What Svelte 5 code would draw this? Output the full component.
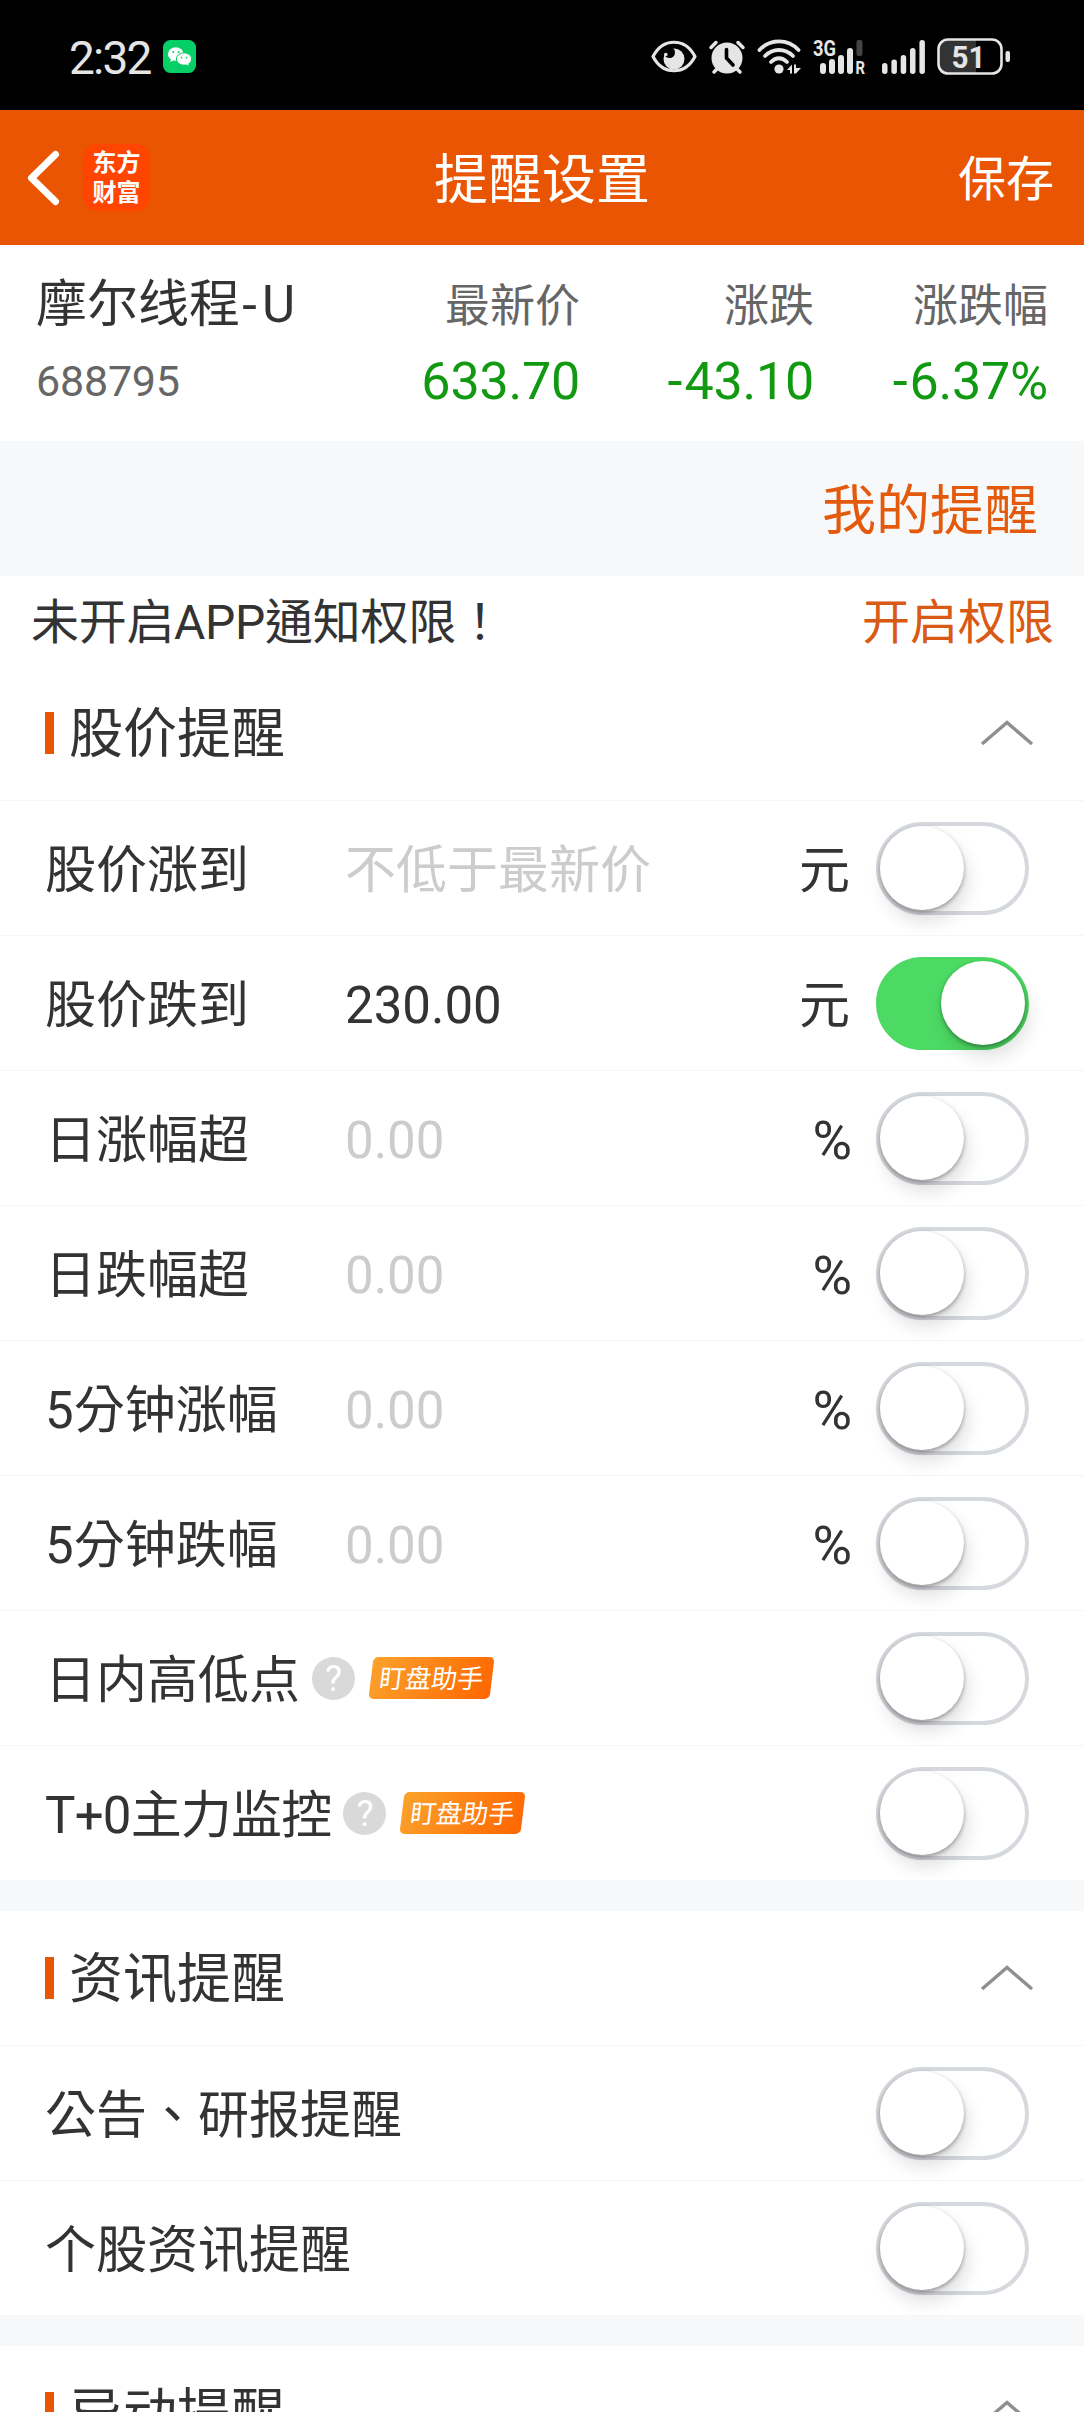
<script lang="ts">
	let stock = {
		name: '摩尔线程',
		suffix: 'U',
		code: '688795',
		quotes: [
			{ label: '最新价', sign: '', value: '633.70' },
			{ label: '涨跌', sign: '-', value: '43.10' },
			{ label: '涨跌幅', sign: '-', value: '6.37%' }
		]
	};

	let sections = [
		{
			title: '股价提醒',
			open: true,
			rows: [
				{ label: '股价涨到', placeholder: '不低于最新价', value: '', unit: '元', on: false },
				{ label: '股价跌到', placeholder: '', value: '230.00', unit: '元', on: true },
				{ label: '日涨幅超', placeholder: '0.00', value: '', unit: '%', on: false },
				{ label: '日跌幅超', placeholder: '0.00', value: '', unit: '%', on: false },
				{ label: '5分钟涨幅', placeholder: '0.00', value: '', unit: '%', on: false },
				{ label: '5分钟跌幅', placeholder: '0.00', value: '', unit: '%', on: false },
				{ label: '日内高低点', badge: '盯盘助手', on: false },
				{ label: 'T+0主力监控', badge: '盯盘助手', tight: true, on: false }
			]
		},
		{
			title: '资讯提醒',
			open: true,
			rows: [
				{ label: '公告、研报提醒', on: false },
				{ label: '个股资讯提醒', on: false }
			]
		},
		{ title: '异动提醒', open: true, rows: [] }
	];

	function toggleRow(row: any) {
		row.on = !row.on;
		sections = sections;
	}

	function toggleSection(section: any) {
		section.open = !section.open;
		sections = sections;
	}
</script>

<div class="screen">
	<div class="status">
		<span class="time">2:32</span>
		<svg class="wechat" width="33" height="33" viewBox="0 0 33 33">
			<rect width="33" height="33" rx="7.5" fill="#07cf68" />
			<ellipse cx="12.7" cy="14" rx="7.8" ry="6.7" fill="#fff" />
			<path d="M8 18l-.6 4 4-2z" fill="#fff" />
			<ellipse cx="21" cy="19" rx="7.6" ry="6.2" fill="#fff" stroke="#07cf68" />
			<path d="M22 24l3.6 1.6-.4-3z" fill="#fff" />
			<g fill="#07cf68">
				<circle cx="10.2" cy="12" r="1" />
				<circle cx="15.6" cy="12" r="1" />
				<circle cx="18.6" cy="17.6" r=".9" />
				<circle cx="23.4" cy="17.6" r=".9" />
			</g>
		</svg>

		<div class="icons">
			<svg width="46" height="33" viewBox="0 0 46 33">
				<path d="M2 16.5C12-2.5 34-2.5 44 16.5C34 35.5 12 35.5 2 16.5z" fill="none" stroke="#e5e5e5" stroke-width="3.2" stroke-linejoin="round" />
				<circle cx="23" cy="19" r="10.5" fill="#e5e5e5" />
				<circle cx="18.5" cy="12.5" r="5.5" fill="#000" />
				<circle cx="14.8" cy="14.5" r="1.8" fill="#e5e5e5" />
			</svg>
			<svg width="36" height="34" viewBox="0 0 36 34">
				<circle cx="18" cy="18" r="15.5" fill="#e5e5e5" />
				<path d="M2 7.5L7 2.5M34 7.5L29 2.5M8 29l-3 3M28 29l3 3" stroke="#e5e5e5" stroke-width="3.5" stroke-linecap="round" />
				<path d="M17.5 9.5v8.5l6.5 7" fill="none" stroke="#000" stroke-width="3.6" stroke-linecap="round" />
			</svg>
			<svg width="44" height="35" viewBox="0 0 44 35">
				<g fill="none" stroke="#e5e5e5" stroke-width="3.8" stroke-linecap="round">
					<path d="M2.5 11C13-.5 31-.5 41.5 11" />
					<path d="M8 17C16 9 28 9 36 17" />
					<path d="M14 23C19 18 25 18 30 23" />
				</g>
				<circle cx="22" cy="30" r="4.6" fill="#e5e5e5" />
				<path d="M30 31l5-5.5v9h-2v-3.5zM37 25.5h2v3.5h5l-5 5.5h-2z" fill="#e5e5e5" />
			</svg>
			<svg class="sim" width="53" height="36" viewBox="0 0 53 36">
				<text x="0" y="17" font-size="22" textLength="23" lengthAdjust="spacingAndGlyphs">3G</text>
				<g fill="#e5e5e5">
					<rect x="7" y="24" width="6" height="11" rx="3" />
					<rect x="16" y="20" width="6" height="15" rx="3" />
					<rect x="25" y="16" width="6" height="19" rx="3" />
					<rect x="34" y="9" width="6" height="26" rx="3" />
				</g>
				<rect x="43.5" y="1" width="6" height="16" rx="2" fill="#444" />
				<text x="42.5" y="35" font-size="19" textLength="9.5" lengthAdjust="spacingAndGlyphs">R</text>
			</svg>
			<svg class="signal" width="43" height="36" viewBox="0 0 43 36" fill="#e5e5e5">
				<rect x="0" y="24" width="5.5" height="11" rx="2.7" />
				<rect x="9.4" y="20.5" width="5.5" height="14.5" rx="2.7" />
				<rect x="18.7" y="16" width="5.5" height="19" rx="2.7" />
				<rect x="28" y="9" width="5.5" height="26" rx="2.7" />
				<rect x="37.4" y="1" width="5.5" height="34" rx="2.7" />
			</svg>
			<svg class="battery" width="73" height="37" viewBox="0 0 73 37">
				<path d="M11 2h28v33H11a9 9 0 0 1-9-9V11a9 9 0 0 1 9-9z" fill="#333" />
				<rect x="1.5" y="1.5" width="63" height="34" rx="9.5" fill="none" stroke="#e5e5e5" stroke-width="2.6" />
				<rect x="68.5" y="13" width="4.5" height="11" rx="2" fill="#e5e5e5" />
				<text x="14.5" y="30" font-size="32" textLength="34" lengthAdjust="spacingAndGlyphs">51</text>
			</svg>
		</div>
	</div>

	<header>
		<svg class="back" width="34" height="56" viewBox="0 0 34 56">
			<path d="M29.5 4.5L5.5 28L29.5 51.5" fill="none" stroke="#fff" stroke-width="7" stroke-linecap="round" stroke-linejoin="round" />
		</svg>
		<div class="logo">东方<br />财富</div>
		<h1>提醒设置</h1>
		<span class="save">保存</span>
	</header>

	<div class="stock">
		<div class="who">
			<div class="name">{stock.name}<span class="sign">-</span>{stock.suffix}</div>
			<div class="code">{stock.code}</div>
		</div>
		{#each stock.quotes as quote}
			<div class="quote">
				<div class="key">{quote.label}</div>
				<div class="value"><span class="sign">{quote.sign}</span>{quote.value}</div>
			</div>
		{/each}
	</div>

	<div class="mine">我的提醒</div>

	<div class="notice">
		<span class="warn">未开启APP通知权限！</span>
		<span class="link">开启权限</span>
	</div>

	{#each sections as section}
		<section>
			<div class="head">
				<i class="bar"></i>
				<h2>{section.title}</h2>
				<button class="fold" class:closed={!section.open} aria-label={section.title} on:click={() => toggleSection(section)}>
					<svg width="54" height="26" viewBox="0 0 54 26">
						<path d="M2 24L27 2.5L52 24" fill="none" stroke="#8f8f93" stroke-width="3.5" />
					</svg>
				</button>
			</div>
			{#if section.open}
				{#each section.rows as row}
					<div class="row">
						<span class="label" class:fixed={row.unit} class:tight={row.tight}>{row.label}</span>
						{#if row.unit}
							<span class="input" class:empty={!row.value}>{row.value || row.placeholder}</span>
							<span class="unit" class:percent={row.unit === '%'}>{row.unit}</span>
						{/if}
						{#if row.badge}
							<span class="help">?</span>
							<span class="badge">{row.badge}</span>
						{/if}
						<button class="switch" class:on={row.on} aria-label={row.label} on:click={() => toggleRow(row)}>
							<i></i>
						</button>
					</div>
				{/each}
			{/if}
		</section>
	{/each}
</div>

<style>
	:global(body) {
		margin: 0;
		background: #fff;
	}

	.screen {
		width: 1084px;
		height: 2412px;
		overflow: hidden;
		background: #fff;
		color: #333;
		font-family: Roboto, 'Noto Sans CJK TC', sans-serif;
		font-size: 51px;
		line-height: 60px;
		white-space: nowrap;
	}

	button {
		padding: 0;
		border: 0;
		background: none;
	}

	svg {
		display: block;
		overflow: visible;
	}

	.status {
		display: flex;
		align-items: center;
		height: 110px;
		padding: 3px 74px 0 69px;
		box-sizing: border-box;
		background: #000;
		color: #e5e5e5;
	}

	.time {
		width: 94px;
		padding-top: 2px;
		font-size: 46px;
		letter-spacing: -1.8px;
	}

	.icons {
		display: flex;
		align-items: center;
		gap: 12px;
		margin-left: auto;
	}

	.icons text {
		fill: #e5e5e5;
		font-family: Roboto, sans-serif;
		font-weight: 700;
	}

	.signal {
		margin-left: 4px;
	}

	header {
		display: flex;
		align-items: center;
		height: 135px;
		padding: 0 30px 0 26px;
		box-sizing: border-box;
		background: #ea5504;
		color: #fff;
	}

	.logo {
		width: 67px;
		height: 67px;
		margin-left: 23px;
		padding-top: 5px;
		box-sizing: border-box;
		border-radius: 14px;
		background: #ff4500;
		font-size: 24px;
		font-weight: 700;
		line-height: 29.5px;
		text-align: center;
	}

	h1,
	h2 {
		margin: 0;
		font-size: 54px;
		font-weight: 400;
	}

	h1 {
		flex: 1;
		padding: 6px 0 0 284px;
	}

	h2 {
		padding-top: 4px;
	}

	.save {
		padding-top: 5px;
		font-size: 48px;
	}

	.stock {
		display: flex;
		height: 196px;
		padding: 30px 36px 0 36px;
		box-sizing: border-box;
	}

	.who {
		width: 310px;
	}

	/* wider dash than the digits' own font has */
	.sign {
		font-family: Lato, sans-serif;
		line-height: 1;
	}

	.name .sign {
		letter-spacing: 3px;
	}

	.code {
		margin-top: 16px;
		color: #666;
		font-size: 43px;
		letter-spacing: -0.2px;
	}

	.quote {
		width: 234px;
		text-align: right;
	}

	.key {
		padding-top: 2px;
		color: #666;
		font-size: 45px;
	}

	.value {
		margin-top: 15px;
		color: #119911;
		font-size: 52px;
		letter-spacing: -0.2px;
	}

	.mine {
		height: 135px;
		padding: 5px 46px 0 0;
		box-sizing: border-box;
		background: #f7f8fa;
		color: #e35a0c;
		font-size: 54px;
		line-height: 132px;
		text-align: right;
	}

	.notice {
		display: flex;
		align-items: center;
		justify-content: space-between;
		height: 90px;
		padding: 3px 30px 0 31px;
		box-sizing: border-box;
		font-size: 48px;
	}

	.warn {
		letter-spacing: -0.3px;
	}

	.link {
		color: #d95a14;
	}

	section {
		border-bottom: 31px solid #f7f8fa;
	}

	.head,
	.row {
		display: flex;
		align-items: center;
		height: 135px;
		box-sizing: border-box;
		border-bottom: 1px solid #f5f6f8;
	}

	.head {
		padding: 0 50px 0 45px;
	}

	.row {
		padding: 0 55px 0 45px;
	}

	.row:last-child {
		height: 134px;
		border-bottom: 0;
	}

	.bar {
		width: 9px;
		height: 42px;
		margin-right: 15px;
		background: #ea5504;
	}

	.fold {
		margin-left: auto;
	}

	.fold.closed {
		transform: rotate(180deg);
	}

	.label,
	.input,
	.unit {
		padding-top: 5px;
	}

	.fixed {
		width: 300px;
	}

	.tight {
		letter-spacing: -0.8px;
	}

	.input {
		flex: 1;
	}

	.empty {
		color: #ccc;
	}

	.percent {
		font-size: 54px;
	}

	.help {
		width: 43px;
		height: 43px;
		margin-left: 12px;
		border-radius: 50%;
		background: #d9d9d9;
		color: #fff;
		font-size: 36px;
		line-height: 44px;
		text-align: center;
	}

	.badge {
		width: 121px;
		height: 42px;
		margin-left: 16px;
		border-radius: 5px;
		background: linear-gradient(110deg, #fba22c, #ff6600);
		color: #fff;
		font-size: 26px;
		line-height: 45px;
		text-align: center;
		transform: skewX(-7deg);
	}

	.switch {
		display: flex;
		width: 153px;
		height: 93px;
		margin-left: auto;
		padding: 0;
		box-sizing: border-box;
		border: 4.5px solid #d5d8dd;
		border-radius: 47px;
	}

	.unit + .switch {
		margin-left: 26px;
	}

	.percent + .switch {
		margin-left: 24px;
	}

	.switch i {
		width: 84px;
		height: 84px;
		border-radius: 50%;
		background: #fff;
		box-shadow:
			0 2px 4px rgba(0, 0, 0, 0.35),
			4px 12px 18px rgba(0, 0, 0, 0.12);
	}

	.switch.on {
		justify-content: flex-end;
		border-color: #4cd964;
		background: #4cd964;
	}
</style>
